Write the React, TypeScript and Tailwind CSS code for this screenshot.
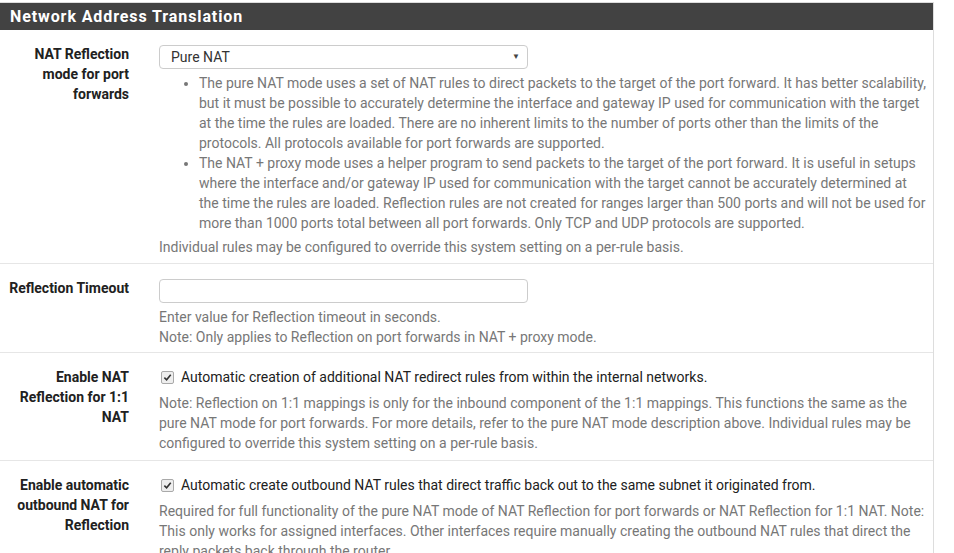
import React from "react";

function Checkbox() {
  return (
    <span className="inline-flex h-[13px] w-[13px] shrink-0 items-center justify-center rounded-[2px] border border-[#a9a9a9] bg-[#eeeeee]">
      <svg width="9" height="9" viewBox="0 0 10 10">
        <path d="M1.5 5.2 L4 7.6 L8.6 2" fill="none" stroke="#333" strokeWidth="1.8" />
      </svg>
    </span>
  );
}

function Row({
  label,
  children,
  last,
  pb,
}: {
  label: React.ReactNode;
  children: React.ReactNode;
  last?: boolean;
  pb: string;
}) {
  return (
    <div className={`flex pt-[14px] ${pb} ${last ? "" : "border-b border-[#e6e6e6]"}`}>
      <div className="w-[130px] shrink-0 pr-px text-right text-[14px] font-bold leading-[20px] text-[#212121]">
        {label}
      </div>
      <div className="ml-[29px] w-[768px] text-[14px] leading-[20px] text-[#777777]">{children}</div>
    </div>
  );
}

export default function App() {
  return (
    <div
      className="h-[553px] w-[954px] overflow-hidden bg-white pt-[2px]"
      style={{ fontFamily: "Roboto, 'Liberation Sans', sans-serif" }}
    >
      <div className="w-[934px] border-r border-t border-[#dddddd]">
        <div className="flex h-[27px] items-center bg-[#424242] pl-[10px] text-[16px] font-bold tracking-[0.9px] text-white">
          Network Address Translation
        </div>
        <Row
          pb="pb-[6px]"
          label={
            <>
              NAT Reflection
              <br />
              mode for port
              <br />
              forwards
            </>
          }
        >
          <div className="mt-px flex h-[24px] w-[369px] items-center justify-between rounded-[4px] border border-[#cccccc] bg-white pl-[11px] pr-[7px] text-[#333333]">
            <span>Pure NAT</span>
            <span className="text-[8px] text-[#444]">▼</span>
          </div>
          <ul className="mb-[4px] mt-[4px] list-disc pl-[40px] marker:text-[#777]">
            <li>
              The pure NAT mode uses a set of NAT rules to direct packets to the target of the port forward. It has
              better scalability, but it must be possible to accurately determine the interface and gateway IP used for
              communication with the target at the time the rules are loaded. There are no inherent limits to the number
              of ports other than the limits of the protocols. All protocols available for port forwards are supported.
            </li>
            <li>
              The NAT + proxy mode uses a helper program to send packets to the target of the port forward. It is useful
              in setups where the interface and/or gateway IP used for communication with the target cannot be
              accurately determined at the time the rules are loaded. Reflection rules are not created for ranges larger
              than 500 ports and will not be used for more than 1000 ports total between all port forwards. Only TCP and
              UDP protocols are supported.
            </li>
          </ul>
          <div>Individual rules may be configured to override this system setting on a per-rule basis.</div>
        </Row>
        <Row pb="pb-[5px]" label="Reflection Timeout">
          <div className="mt-px h-[24px] w-[369px] rounded-[4px] border border-[#cccccc] bg-white" />
          <div className="mt-[4px]">Enter value for Reflection timeout in seconds.</div>
          <div>Note: Only applies to Reflection on port forwards in NAT + proxy mode.</div>
        </Row>
        <Row
          pb="pb-[7px]"
          label={
            <>
              Enable NAT
              <br />
              Reflection for 1:1
              <br />
              NAT
            </>
          }
        >
          <div className="flex items-center gap-[7px] pl-[2px] text-[#212121]">
            <Checkbox />
            <span>Automatic creation of additional NAT redirect rules from within the internal networks.</span>
          </div>
          <div className="mt-[6px]">
            Note: Reflection on 1:1 mappings is only for the inbound component of the 1:1 mappings. This functions the
            same as the pure NAT mode for port forwards. For more details, refer to the pure NAT mode description above.
            Individual rules may be configured to override this system setting on a per-rule basis.
          </div>
        </Row>
        <Row
          last
          pb="pb-[8px]"
          label={
            <>
              Enable automatic
              <br />
              outbound NAT for
              <br />
              Reflection
            </>
          }
        >
          <div className="flex items-center gap-[7px] pl-[2px] text-[#212121]">
            <Checkbox />
            <span>Automatic create outbound NAT rules that direct traffic back out to the same subnet it originated from.</span>
          </div>
          <div className="mt-[6px]">
            Required for full functionality of the pure NAT mode of NAT Reflection for port forwards or NAT Reflection
            for 1:1 NAT. Note: This only works for assigned interfaces. Other interfaces require manually creating the
            outbound NAT rules that direct the reply packets back through the router.
          </div>
        </Row>
      </div>
    </div>
  );
}
